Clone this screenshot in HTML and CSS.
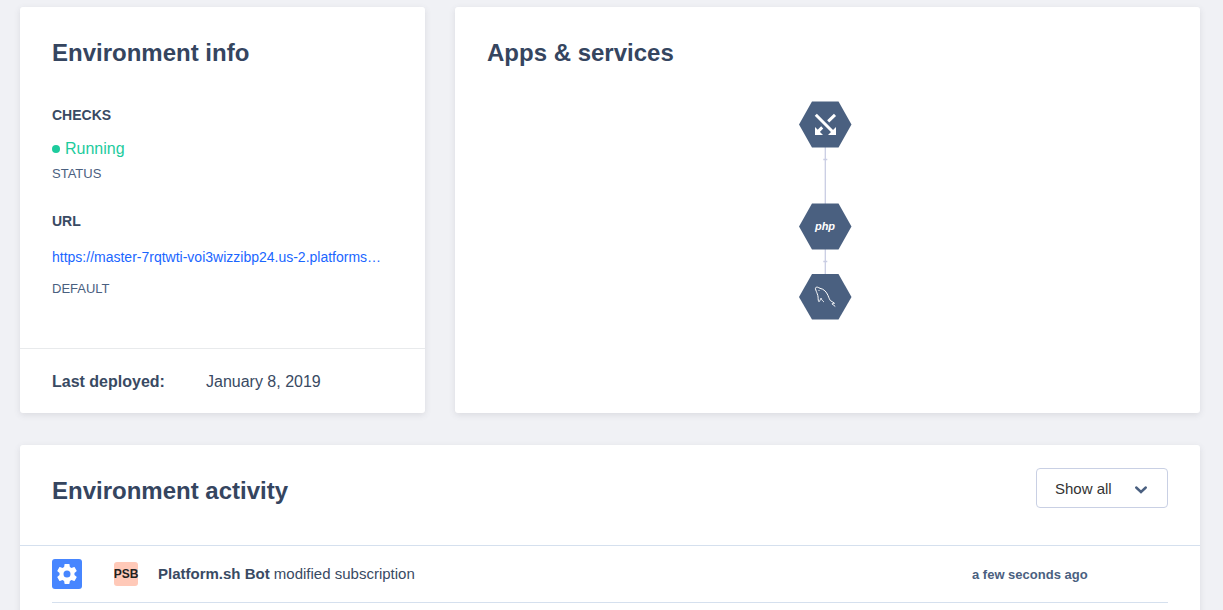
FILE: index.html
```
<!DOCTYPE html>
<html lang="en">
<head>
<meta charset="utf-8">
<meta name="viewport" content="width=device-width, initial-scale=1">
<title>Environment</title>
<link rel="stylesheet" href="styles.css">
</head>
<body>
<main class="page">
  <div class="overview">
    <section class="card info">
      <div class="info-body">
        <h2 class="title">Environment info</h2>
        <h3 class="subtitle">CHECKS</h3>
        <p class="status"><span class="dot"></span>Running</p>
        <p class="caption">STATUS</p>
        <h3 class="subtitle subtitle-url">URL</h3>
        <a class="url" href="https://master-7rqtwti-voi3wizzibp24.us-2.platformsh.site/">https://master-7rqtwti-voi3wizzibp24.us-2.platforms…</a>
        <p class="caption">DEFAULT</p>
      </div>
      <footer class="deployed">
        <strong class="deployed-label">Last deployed:</strong>
        <span>January 8, 2019</span>
      </footer>
    </section>
    <section class="card services">
      <h2 class="title">Apps &amp; services</h2>
      <div class="tree">
        <svg width="53" height="220" viewBox="0 0 53 220" role="img" aria-label="Service tree">
          <g stroke="#c9cde3" stroke-width="1.300" fill="none">
            <path d="M26.300 46V103M24.300 58.500h4M26.300 148V173M24.300 160.500h4"/>
          </g>
          <g fill="#4a6080">
            <path d="M13 .5H39.500L52.500 23.500 39.500 46.500H13L0 23.500Z"/>
            <path d="M13 102.500H39.500L52.500 125.500 39.500 148.500H13L0 125.500Z"/>
            <path d="M13 173H39.500L52.500 196 39.500 218.500H13L0 196Z"/>
          </g>
          <g stroke="#fff" stroke-width="3" fill="none">
            <path d="M16.800 13.800 34 31M36 13.800 29.200 20.400M23.200 26.400 19 30.600"/>
          </g>
          <path fill="#fff" d="M16 26V34H24ZM37 26V34H29Z"/>
          <text class="php" x="26" y="129" text-anchor="middle">php</text>
          <path stroke="#fff" stroke-width="1" fill="none" stroke-linejoin="round" stroke-linecap="round" d="M22 197.500C20.800 199 20.600 201 19.800 200.600C18.800 199 19.400 196.500 18.800 194.500C18 191.800 17.500 191 16.800 189C16 187 16.400 186 18.500 186.200C19.500 186.400 20 187 21 187.300C25 188 27.500 191 29 194.500C30 197 30.800 199 31.500 199.700C32.800 200.600 34.500 201.200 35.500 202.300C34 202.400 32.500 202.300 33.200 203.200C34.200 204 35.200 204.300 36 205.200M22 197.500C22.800 199 23.800 200 24.600 200.700"/>
          <circle cx="20" cy="189.500" r=".6" fill="#fff"/>
        </svg>
      </div>
    </section>
  </div>
  <section class="card activity">
    <header class="activity-head">
      <h2 class="title">Environment activity</h2>
      <div class="filter">
        <select class="filter-select" aria-label="Filter activity">
          <option>Show all</option>
        </select>
        <svg class="chevron" width="14" height="10" viewBox="0 0 14 10" aria-hidden="true"><path d="M2.200 2.500 7 7 11.800 2.500" fill="none" stroke="#4a6080" stroke-width="2.400" stroke-linecap="round"/></svg>
      </div>
    </header>
    <ul class="list">
      <li class="row">
        <span class="kind">
          <svg width="24" height="24" viewBox="0 0 24 24" aria-hidden="true"><path fill="#fff" d="M19.430 12.980c.04-.32.070-.64.070-.98s-.03-.66-.07-.98l2.110-1.650c.19-.15.240-.42.120-.64l-2-3.460c-.12-.22-.39-.3-.61-.22l-2.490 1c-.52-.4-1.080-.73-1.690-.98l-.38-2.650C14.460 2.180 14.250 2 14 2h-4c-.25 0-.46.180-.49.420l-.38 2.650c-.61.250-1.170.590-1.690.980l-2.490-1c-.23-.09-.49 0-.61.220l-2 3.460c-.13.220-.07.490.120.640l2.110 1.650c-.04.320-.07.650-.07.980s.03.660.070.980l-2.110 1.650c-.19.150-.24.420-.12.640l2 3.460c.12.220.390.300.610.220l2.490-1c.52.400 1.080.730 1.690.980l.38 2.650c.03.240.240.420.490.420h4c.25 0 .46-.18.490-.42l.38-2.650c.61-.25 1.170-.59 1.690-.98l2.490 1c.23.090.490 0 .61-.22l2-3.460c.12-.22.070-.49-.12-.64l-2.110-1.650zM12 15.500a3.500 3.500 0 1 1 0-7 3.500 3.500 0 0 1 0 7z"/></svg>
        </span>
        <span class="avatar">PSB</span>
        <span class="message"><strong>Platform.sh Bot</strong> modified subscription</span>
        <time class="when">a few seconds ago</time>
      </li>
    </ul>
  </section>
</main>
</body>
</html>
```
FILE: styles.css
```
* {
  box-sizing: border-box;
}

body {
  margin: 0;
  background: #f0f1f5;
  color: #394a63;
  font-family: "Liberation Sans", Arial, sans-serif;
  font-size: 16px;
  line-height: 24px;
  overflow: hidden;
}

h2, h3, p, ul {
  margin: 0;
  padding: 0;
}

.page {
  display: flex;
  flex-direction: column;
  gap: 32px;
  padding: 7px 23px 0 20px;
}

.overview {
  display: grid;
  grid-template-columns: minmax(0, 405fr) minmax(0, 745fr);
  gap: 30px;
}

.card {
  background: #fff;
  border-radius: 3px;
  box-shadow: 0 2px 6px rgba(75, 75, 90, 0.13);
}

.title {
  font-size: 24px;
  line-height: 32px;
  color: #35455f;
}

.info-body {
  padding: 30px 32px 49px;
}

.subtitle {
  margin-top: 36px;
  font-size: 14px;
  line-height: 20px;
}

.subtitle-url {
  margin-top: 27px;
}

.status {
  display: flex;
  align-items: center;
  gap: 5px;
  margin-top: 12px;
  color: #1dcb9d;
}

.dot {
  width: 8px;
  height: 8px;
  border-radius: 50%;
  background: #1dcb9d;
}

.caption {
  margin-top: 3px;
  font-size: 13px;
  line-height: 20px;
  color: #4a6080;
}

.url {
  display: block;
  margin: 14px 0 10px;
  overflow: hidden;
  color: #1a66ff;
  font-size: 14px;
  line-height: 24px;
  text-decoration: none;
  white-space: nowrap;
}

.url + .caption {
  margin-top: 0;
}

.deployed {
  display: flex;
  padding: 21px 32px 19px;
  border-top: 1px solid #e8eaec;
}

.deployed-label {
  flex: 0 0 154px;
}

.services {
  padding: 30px 32px;
}

.tree {
  display: flex;
  justify-content: center;
  margin-top: 32px;
  padding-right: 4px;
}

.php {
  fill: #fff;
  font: italic bold 11px "Liberation Sans", Arial, sans-serif;
}

.activity {
  padding-bottom: 32px;
}

.activity-head {
  display: flex;
  justify-content: space-between;
  padding: 23px 32px 37px;
  border-bottom: 1px solid #d5e0ee;
}

.activity-head .title {
  margin-top: 7px;
}

.filter {
  position: relative;
}

.filter-select {
  appearance: none;
  width: 132px;
  height: 40px;
  padding: 0 18px;
  border: 1px solid #c9d0e4;
  border-radius: 4px;
  background: #fff;
  color: #333;
  font-family: inherit;
  font-size: 15px;
}

.chevron {
  position: absolute;
  top: 17px;
  right: 20px;
  pointer-events: none;
}

.list {
  padding: 0 32px;
  list-style: none;
}

.row {
  display: grid;
  grid-template-columns: 62px 44px minmax(0, 1fr) 196px;
  align-items: center;
  height: 57px;
  border-bottom: 1px solid #d5e0ee;
  font-size: 15px;
}

.kind {
  display: flex;
  align-items: center;
  justify-content: center;
  width: 30px;
  height: 30px;
  border-radius: 3px;
  background: #4786ff;
}

.avatar {
  display: flex;
  align-items: center;
  justify-content: center;
  width: 24px;
  height: 24px;
  border-radius: 3px;
  background: #ffc9b8;
  color: #222;
  font-size: 12px;
  font-weight: bold;
}

.when {
  padding-top: 2px;
  color: #4a6080;
  font-size: 13px;
  font-weight: bold;
}
```
